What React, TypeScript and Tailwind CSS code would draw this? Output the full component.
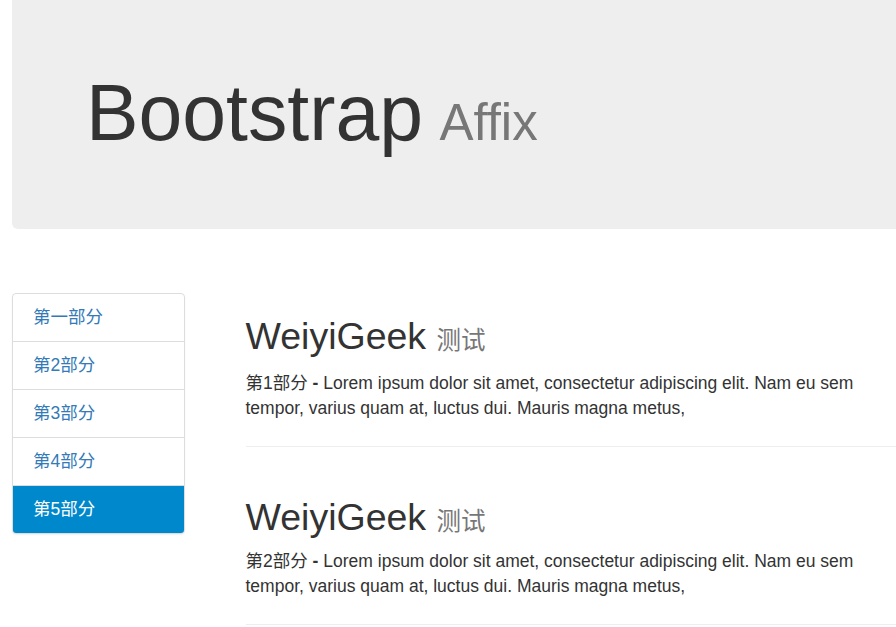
import React from "react";

const sans = "font-['Liberation_Sans','Noto_Sans_CJK_SC',sans-serif]";

const items = ["第一部分", "第2部分", "第3部分", "第4部分", "第5部分"];

function Section({ n, pm }: { n: number; pm: string }) {
  return (
    <div className="flex flex-col">
      <h2 className="text-[37.5px] leading-[41px] text-[#333]">
        WeiyiGeek <small className="text-[24.5px] text-[#777]">测试</small>
      </h2>
      <p className={`${pm} text-[17.5px] leading-[25px] text-[#333]`}>
        <span className="leading-[1]">第{n}部分</span> <b className="font-bold">-</b> Lorem ipsum dolor sit amet, consectetur adipiscing elit. Nam eu sem
        tempor, varius quam at, luctus dui. Mauris magna metus,
      </p>
      <hr className="mt-[25px] border-0 border-t border-[#eee]" />
    </div>
  );
}

export default function App() {
  return (
    <div className={`w-[896px] h-[627px] overflow-hidden bg-white ${sans}`}>
      <div className="ml-[12px] w-[1000px] h-[229px] bg-[#eee] rounded-b-[6px] pl-[74px] pt-[69px]">
        <h1 className="text-[78.75px] leading-[88px] text-[#333] whitespace-nowrap">
          Bootstrap<small className="ml-[5px] text-[51px] text-[#777]"> Affix</small>
        </h1>
      </div>
      <div className="mt-[64px] flex">
        <ul className="ml-[12px] w-[175px] self-start rounded-[4px] border border-[#ddd] overflow-hidden shadow-[0_1px_2px_rgba(0,0,0,0.06)]">
          {items.map((t, i) => (
            <li
              key={t}
              className={`flex items-center pl-[20px] text-[17.5px] ${
                i > 0 ? "h-[48px] border-t border-[#ddd]" : "h-[47px]"
              } ${i === 4 ? "bg-[#0088cc] text-white border-[#0088cc]" : "text-[#337ab7]"}`}
            >
              {t}
            </li>
          ))}
        </ul>
        <div className="ml-[61px] w-[660px] flex flex-col gap-[50px] pt-[23px]">
          <Section n={1} pm="mt-[10px]" />
          <Section n={2} pm="mt-[7px]" />
        </div>
      </div>
    </div>
  );
}
